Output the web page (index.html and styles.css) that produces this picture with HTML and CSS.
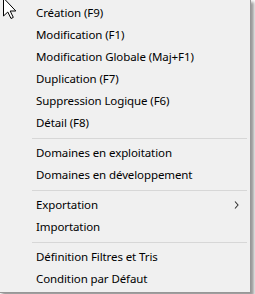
FILE: index.html
```html
<!DOCTYPE html>
<html lang="fr">
<head>
    <meta charset="UTF-8">
    <meta name="viewport" content="width=device-width, initial-scale=1.0">
    <title>Menu contextuel</title>
    <link rel="stylesheet" href="styles.css">
</head>
<body>
    <div class="menu">
        <ul class="menu-list">
            <li class="menu-item">Création (F9)</li>
            <li class="menu-item">Modification (F1)</li>
            <li class="menu-item">Modification Globale (Maj+F1)</li>
            <li class="menu-item">Duplication (F7)</li>
            <li class="menu-item">Suppression Logique (F6)</li>
            <li class="menu-item">Détail (F8)</li>
            <li class="separator"></li>
            <li class="menu-item">Domaines en exploitation</li>
            <li class="menu-item">Domaines en développement</li>
            <li class="separator"></li>
            <li class="menu-item has-sub">Exportation
                <svg class="chevron" width="5" height="8" viewBox="0 0 5 8">
                    <path d="M1 0.5 L4 4 L1 7.5" fill="none" stroke="#333" stroke-width="1.1"/>
                </svg>
            </li>
            <li class="menu-item">Importation</li>
            <li class="separator"></li>
            <li class="menu-item">Définition Filtres et Tris</li>
            <li class="menu-item">Condition par Défaut</li>
        </ul>
    </div>

    <svg class="cursor" width="18" height="20" viewBox="0 0 18 20">
        <path d="M3.5 -2 L3.5 16 L7.8 12 L11 18.5 L13.3 17.4 L10.2 11 L15.8 11 Z" fill="#fff" stroke="#000" stroke-width="1" stroke-linejoin="miter"/>
    </svg>
</body>
</html>
```

FILE: styles.css
```css
body {
    margin: 0;
    background-color: #ffffff;
    font-family: "Noto Sans", "Open Sans", sans-serif;
    font-size: 11.5px;
    letter-spacing: -0.1px;
    color: #000000;
    position: relative;
    overflow: hidden;
    height: 294px;
}

.menu {
    width: 250px;
    margin: -1px 0 0 -1px;
    background-color: #f0f0f0;
    border: 1px solid #979797;
    box-shadow: 3px 3px 3px rgba(0, 0, 0, 0.4);
    padding: 2px 0 2px;
}

.menu-list {
    list-style: none;
    margin: 0;
    padding: 0;
}

.menu-item {
    height: 22px;
    line-height: 22px;
    padding-left: 36px;
    white-space: nowrap;
}

.has-sub {
    display: flex;
    align-items: center;
    justify-content: space-between;
    padding-right: 11px;
}

.chevron {
    display: block;
}

.separator {
    height: 8px;
    display: flex;
    align-items: center;
    padding: 0 3px 0 32px;
}

.separator::before {
    content: "";
    flex: 1;
    height: 1px;
    background-color: #d7d7d7;
}

.cursor {
    position: absolute;
    left: 0;
    top: 0;
}
```
